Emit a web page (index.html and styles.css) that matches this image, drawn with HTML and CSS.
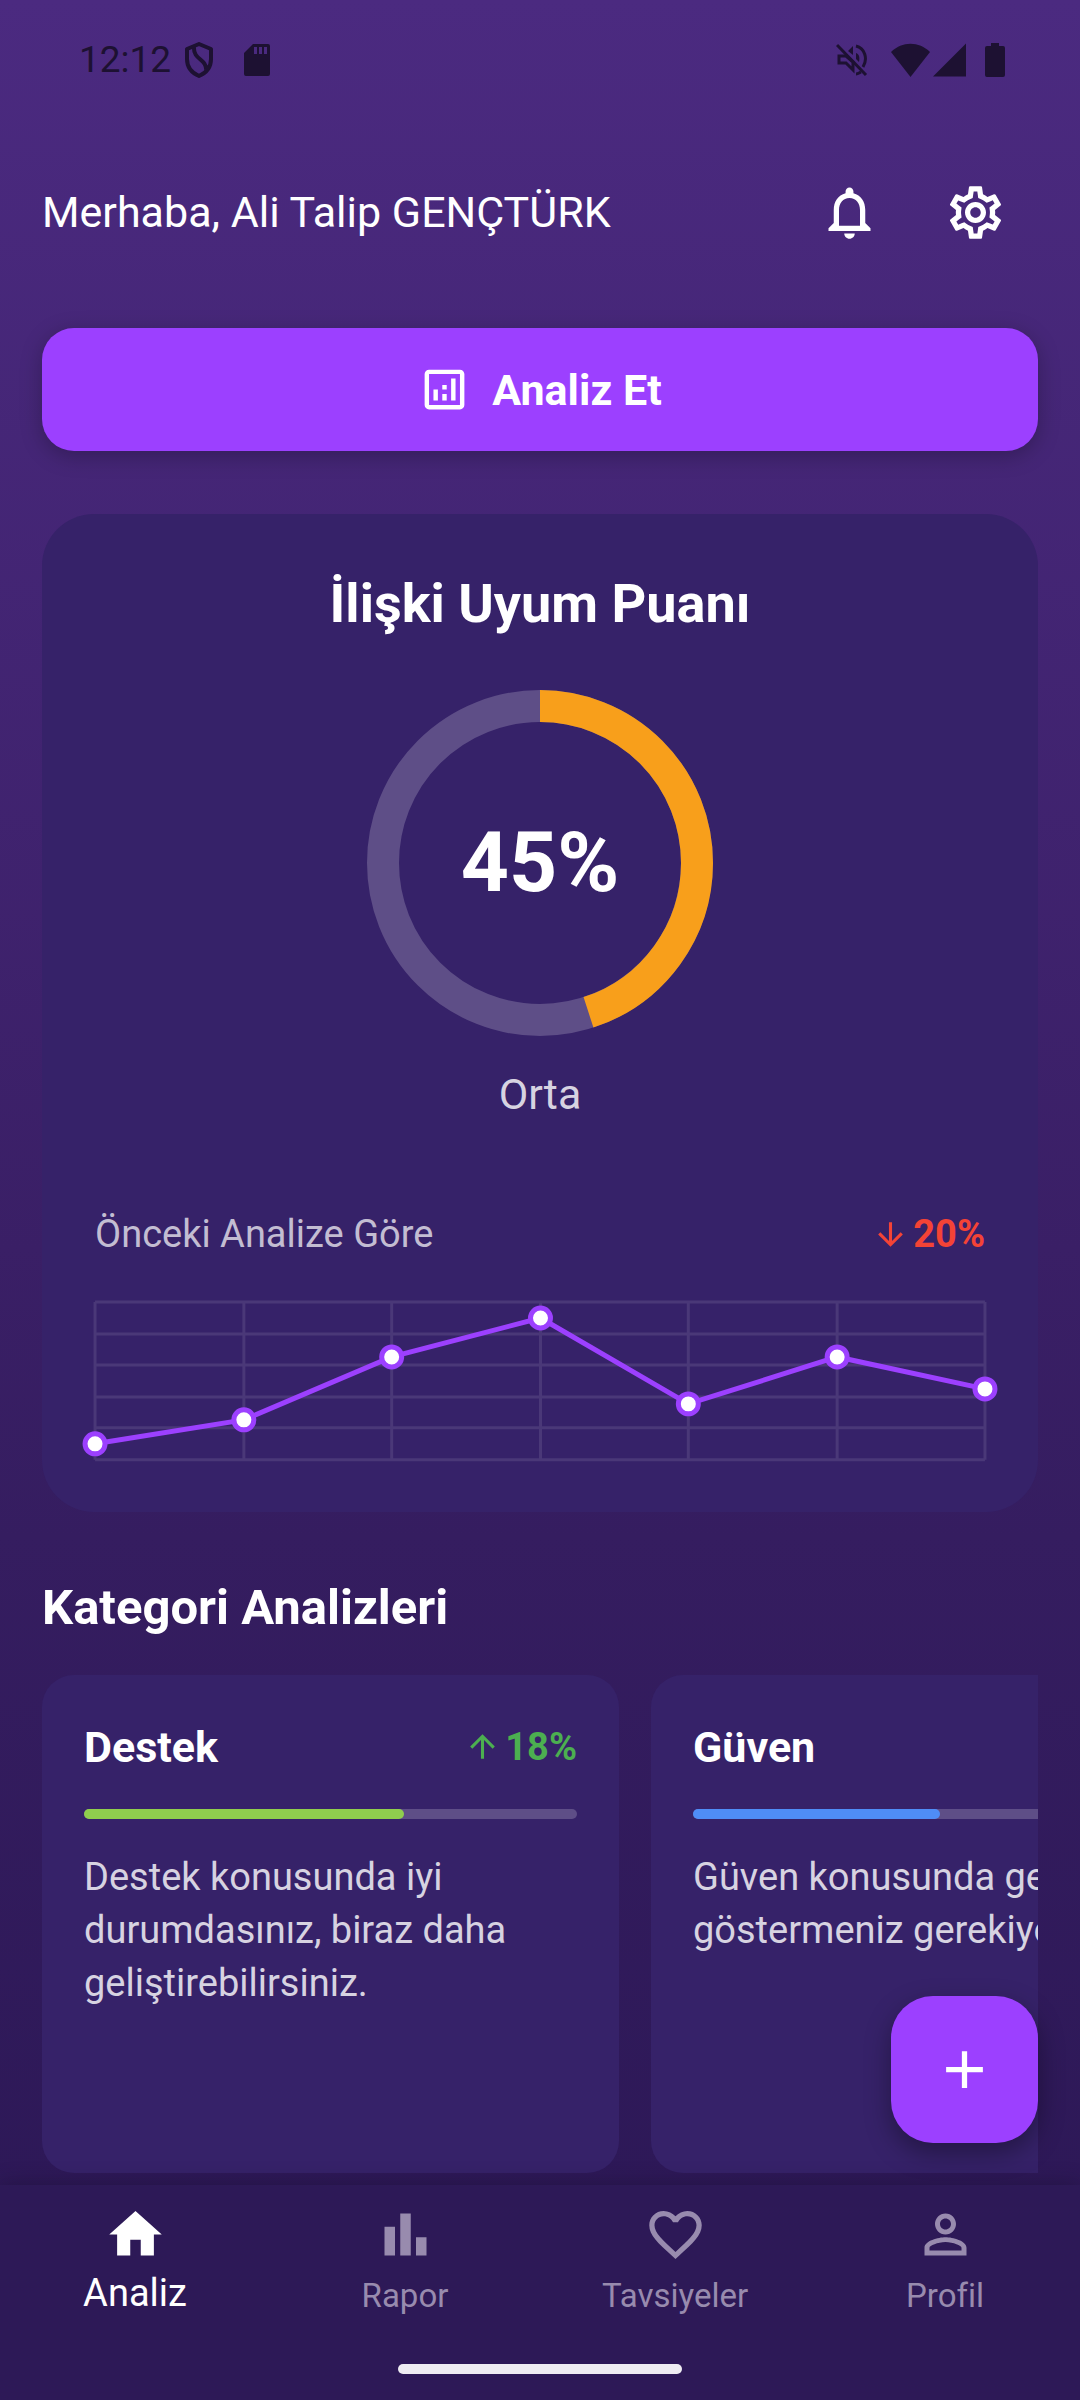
FILE: index.html
```html
<!DOCTYPE html>
<html lang="tr">
<head>
<meta charset="utf-8">
<meta name="viewport" content="width=device-width, initial-scale=1">
<title>Analiz</title>
<link rel="stylesheet" href="styles.css">
</head>
<body>
<div class="app">
  <div class="status-bar">
    <div class="status-group">
      <span class="clock">12:12</span>
      <svg class="status-shield" viewBox="0 0 30 36" aria-hidden="true"><path d="M15 2 27 7v10c0 8-5 14-12 17C8 31 3 25 3 17V7z M10 5C9 18 23 17 22 28" fill="none" stroke="currentColor" stroke-width="4" stroke-linejoin="round"/></svg>
      <svg class="status-sd" viewBox="0 0 26 32" aria-hidden="true"><path fill-rule="evenodd" d="M9 0h15a2 2 0 0 1 2 2v28a2 2 0 0 1-2 2H2a2 2 0 0 1-2-2V9zM10 3v7h3V3zm5 0v7h3V3zm5 0v7h3V3z" fill="currentColor"/></svg>
    </div>
    <div class="status-group">
      <svg class="status-mute" viewBox="0 0 32 34" aria-hidden="true"><path d="M1 2 30 32" stroke="currentColor" stroke-width="3" fill="none"/><path d="M3 13h7l7 6v8l-7-7H3z" fill="none" stroke="currentColor" stroke-width="3"/><path d="M12 8l5-5v9zM20 10c3 1 4 4 3 9l-3-3z" fill="currentColor"/><path d="M20 3c9 2 12 13 7 21M20 31c2 0 3-1 5-2" fill="none" stroke="currentColor" stroke-width="3"/></svg>
      <svg class="status-wifi" viewBox="0 0 39 34" aria-hidden="true"><path d="M0 9c11-11 28-11 39 0L19.500 34z" fill="currentColor"/></svg>
      <svg class="status-signal" viewBox="0 0 34 34" aria-hidden="true"><path d="M34 0v34H0z" fill="currentColor"/></svg>
      <svg class="status-battery" viewBox="0 0 20 34" aria-hidden="true"><path d="M6 0h8v3h4a2 2 0 0 1 2 2v27a2 2 0 0 1-2 2H2a2 2 0 0 1-2-2V5a2 2 0 0 1 2-2h4z" fill="currentColor"/></svg>
    </div>
  </div>

  <header class="header">
    <h1 class="greeting">Merhaba, Ali Talip GENÇTÜRK</h1>
    <button class="icon-button" type="button" aria-label="Bildirimler">
      <svg class="icon" viewBox="0 0 24 24" aria-hidden="true"><path d="M12 22c1.1 0 2-.9 2-2h-4c0 1.100.9 2 2 2zm6-6v-5c0-3.070-1.630-5.640-4.500-6.320V4c0-.83-.67-1.500-1.500-1.500s-1.500.67-1.500 1.500v.68C7.640 5.360 6 7.920 6 11v5l-2 2v1h16v-1l-2-2zm-2 1H8v-6c0-2.480 1.510-4.500 4-4.500s4 2.020 4 4.500v6z"/></svg>
    </button>
    <button class="icon-button" type="button" aria-label="Ayarlar">
      <svg class="icon" viewBox="0 0 24 24" aria-hidden="true"><path d="M19.43 12.98c.04-.32.07-.64.07-.98s-.03-.66-.07-.98l2.110-1.650c.19-.15.24-.42.12-.64l-2-3.460c-.09-.16-.26-.25-.44-.25-.06 0-.12.01-.17.03l-2.490 1c-.52-.4-1.080-.73-1.690-.98l-.38-2.650C14.46 2.180 14.25 2 14 2h-4c-.25 0-.46.18-.49.42l-.38 2.650c-.61.25-1.170.59-1.690.98l-2.490-1c-.06-.02-.12-.03-.18-.03-.17 0-.34.09-.43.25l-2 3.460c-.13.22-.07.49.12.64l2.110 1.650c-.04.32-.07.65-.07.98s.03.66.07.98l-2.110 1.650c-.19.15-.24.42-.12.64l2 3.460c.09.16.26.25.44.25.06 0 .12-.01.17-.03l2.490-1c.52.4 1.080.73 1.690.98l.38 2.650c.03.24.24.42.49.42h4c.25 0 .46-.18.49-.42l.38-2.650c.61-.25 1.170-.59 1.690-.98l2.490 1c.06.02.12.03.18.03.17 0 .34-.09.43-.25l2-3.460c.12-.22.07-.49-.12-.64l-2.110-1.650zm-1.980-1.710c.04.31.05.52.05.73 0 .21-.02.43-.05.73l-.14 1.130.89.7 1.080.84-.7 1.210-1.270-.51-1.040-.42-.9.68c-.43.32-.84.56-1.250.73l-1.060.43-.16 1.130-.2 1.350h-1.400l-.19-1.350-.16-1.130-1.060-.43c-.43-.18-.83-.41-1.230-.71l-.91-.7-1.060.43-1.270.51-.7-1.210 1.080-.84.89-.7-.14-1.130c-.03-.31-.05-.54-.05-.74s.02-.43.05-.73l.14-1.130-.89-.7-1.080-.84.7-1.210 1.270.51 1.040.42.9-.68c.43-.32.84-.56 1.250-.73l1.060-.43.16-1.130.2-1.350h1.390l.19 1.350.16 1.130 1.060.43c.43.18.83.41 1.230.71l.91.7 1.060-.43 1.270-.51.7 1.210-1.070.85-.89.7.14 1.130zM12 8c-2.210 0-4 1.790-4 4s1.790 4 4 4 4-1.790 4-4-1.790-4-4-4zm0 6c-1.100 0-2-.9-2-2s.9-2 2-2 2 .9 2 2-.9 2-2 2z"/></svg>
    </button>
  </header>

  <main class="content">
    <button class="analyze-button" type="button">
      <svg class="icon icon-medium" viewBox="0 0 24 24" aria-hidden="true"><path d="M19 3H5c-1.100 0-2 .9-2 2v14c0 1.100.9 2 2 2h14c1.100 0 2-.9 2-2V5c0-1.100-.9-2-2-2zm0 16H5V5h14v14zM7 12h2v5H7zm8-5h2v10h-2zm-4 7h2v3h-2zm0-4h2v2h-2z"/></svg>
      <span>Analiz Et</span>
    </button>

    <section class="score-card">
      <h2 class="score-title">İlişki Uyum Puanı</h2>
      <div class="ring">
        <svg class="ring-svg" viewBox="0 0 346 346" aria-hidden="true">
          <circle class="ring-track" cx="173" cy="173" r="157"/>
          <circle class="ring-value" cx="173" cy="173" r="157" pathLength="100" stroke-dasharray="45 55" transform="rotate(-90 173 173)"/>
        </svg>
        <span class="ring-label">45%</span>
      </div>
      <p class="score-level">Orta</p>
      <div class="trend-row">
        <span class="trend-title">Önceki Analize Göre</span>
        <span class="delta delta-down">
          <svg class="icon icon-small" viewBox="0 0 24 24" aria-hidden="true"><path d="M20 12l-1.410-1.410L13 16.170V4h-2v12.170l-5.580-5.590L4 12l8 8 8-8z"/></svg>
          20%
        </span>
      </div>
      <svg class="chart" viewBox="0 0 891 158" role="img" aria-label="Önceki analizler">
        <path class="chart-grid" d="M0 0H891M0 32H891M0 63H891M0 95H891M0 126H891M0 158H891M0 0V158M149 0V158M297 0V158M446 0V158M594 0V158M743 0V158M891 0V158"/>
        <polyline class="chart-line" points="0,142 149,118 297,55 446,16 594,102 743,55 891,87"/>
        <g class="chart-dots">
          <circle cx="0" cy="142" r="10"/><circle cx="149" cy="118" r="10"/><circle cx="297" cy="55" r="10"/><circle cx="446" cy="16" r="10"/><circle cx="594" cy="102" r="10"/><circle cx="743" cy="55" r="10"/><circle cx="891" cy="87" r="10"/>
        </g>
      </svg>
    </section>

    <h2 class="section-title">Kategori Analizleri</h2>
    <div class="category-list">
      <article class="category-card">
        <div class="category-head">
          <h3 class="category-name">Destek</h3>
          <span class="delta delta-up">
            <svg class="icon icon-small" viewBox="0 0 24 24" aria-hidden="true"><path d="M4 12l1.410 1.410L11 7.830V20h2V7.830l5.580 5.590L20 12l-8-8-8 8z"/></svg>
            18%
          </span>
        </div>
        <div class="bar"><div class="bar-fill bar-green" style="width: 65%"></div></div>
        <p class="category-text">Destek konusunda iyi durumdasınız, biraz daha geliştirebilirsiniz.</p>
      </article>
      <article class="category-card">
        <div class="category-head">
          <h3 class="category-name">Güven</h3>
        </div>
        <div class="bar"><div class="bar-fill bar-blue" style="width: 50%"></div></div>
        <p class="category-text">Güven konusunda gelişim göstermeniz gerekiyor.</p>
      </article>
    </div>
  </main>

  <div class="bottom">
    <button class="fab" type="button" aria-label="Ekle">
      <svg class="icon" viewBox="0 0 24 24" aria-hidden="true"><path d="M19 13h-6v6h-2v-6H5v-2h6V5h2v6h6v2z"/></svg>
    </button>
    <nav class="nav">
      <a class="nav-item nav-active" href="#analiz" aria-current="page">
        <svg class="icon" viewBox="0 0 24 24" aria-hidden="true"><path d="M10 20v-6h4v6h5v-8h3L12 3 2 12h3v8z"/></svg>
        <span class="nav-label">Analiz</span>
      </a>
      <a class="nav-item" href="#rapor">
        <svg class="icon" viewBox="0 0 24 24" aria-hidden="true"><path d="M4 9h4v11H4zm12 4h4v7h-4zm-6-9h4v16h-4z"/></svg>
        <span class="nav-label">Rapor</span>
      </a>
      <a class="nav-item" href="#tavsiyeler">
        <svg class="icon" viewBox="0 0 24 24" aria-hidden="true"><path d="M16.500 3c-1.740 0-3.410.81-4.500 2.090C10.910 3.810 9.240 3 7.500 3 4.420 3 2 5.420 2 8.500c0 3.780 3.400 6.860 8.550 11.540L12 21.350l1.450-1.320C18.600 15.360 22 12.280 22 8.500 22 5.420 19.580 3 16.500 3zm-4.400 15.550l-.1.1-.1-.1C7.140 14.240 4 11.390 4 8.500 4 6.500 5.500 5 7.500 5c1.540 0 3.040.99 3.570 2.360h1.870C13.460 5.990 14.960 5 16.500 5c2 0 3.500 1.500 3.500 3.500 0 2.890-3.140 5.740-7.900 10.050z"/></svg>
        <span class="nav-label">Tavsiyeler</span>
      </a>
      <a class="nav-item" href="#profil">
        <svg class="icon" viewBox="0 0 24 24" aria-hidden="true"><path d="M12 5.900c1.160 0 2.100.94 2.100 2.100s-.94 2.100-2.100 2.100S9.900 9.160 9.900 8s.94-2.100 2.100-2.100m0 9c2.970 0 6.100 1.460 6.100 2.100v1.100H5.900V17c0-.64 3.130-2.100 6.100-2.100M12 4C9.790 4 8 5.790 8 8s1.790 4 4 4 4-1.790 4-4-1.790-4-4-4zm0 9c-2.670 0-8 1.340-8 4v3h16v-3c0-2.660-5.330-4-8-4z"/></svg>
        <span class="nav-label">Profil</span>
      </a>
    </nav>
    <div class="gesture"></div>
  </div>
</div>
</body>
</html>
```
FILE: styles.css
```css
* {
  box-sizing: border-box;
  margin: 0;
}

body {
  font-family: Roboto, "Noto Sans", sans-serif;
  font-size: 38px;
  line-height: 52px;
  color: #fff;
  background: #2d1957;
}

.app {
  display: flex;
  flex-direction: column;
  min-height: 100vh;
  background: linear-gradient(#4b2a80, #3a1f66 52%, #351d60 64%, #2b1755);
}

button {
  border: 0;
  padding: 0;
  font: inherit;
  color: inherit;
  background: none;
}

.icon {
  flex: none;
  width: 63px;
  height: 63px;
  fill: currentColor;
}

.icon-medium {
  width: 53px;
  height: 53px;
}

.icon-small {
  width: 37px;
  height: 37px;
}

/* Status bar */
.status-bar {
  display: flex;
  justify-content: space-between;
  padding: 34px 75px 0 79px;
  color: #1d1132;
}

.status-group {
  display: flex;
  align-items: center;
}

.clock {
  margin-right: 13px;
  font-size: 37px;
}

.status-shield {
  width: 30px;
  height: 36px;
  margin-right: 30px;
}

.status-sd {
  width: 26px;
  height: 32px;
}

.status-mute {
  width: 32px;
  height: 34px;
  margin-right: 23px;
}

.status-wifi {
  width: 39px;
  height: 34px;
  margin-right: 3px;
}

.status-signal {
  width: 33px;
  height: 34px;
  margin-right: 19px;
}

.status-battery {
  width: 20px;
  height: 34px;
}

/* Header */
.header {
  display: flex;
  align-items: center;
  padding: 63px 42px 0;
}

.greeting {
  flex: 1;
  font-size: 43px;
  font-weight: 400;
}

.icon-button {
  display: flex;
  align-items: center;
  justify-content: center;
  width: 126px;
  height: 126px;
}

/* Content */
.content {
  display: flex;
  flex: 1;
  flex-direction: column;
  padding: 53px 42px 12px;
}

.analyze-button {
  display: flex;
  align-items: center;
  justify-content: center;
  gap: 21px;
  height: 123px;
  border-radius: 32px;
  background: #9c40ff;
  box-shadow: 0 5px 21px rgba(0, 0, 0, 0.25);
  font-size: 43px;
  font-weight: 700;
}

.score-card {
  display: flex;
  flex-direction: column;
  align-items: center;
  margin-top: 63px;
  padding: 54px 53px 52px;
  border-radius: 52px;
  background: #362269;
}

.score-title {
  font-size: 54px;
  line-height: 72px;
}

.ring {
  display: grid;
  margin-top: 50px;
}

.ring-svg,
.ring-label {
  grid-area: 1 / 1;
  place-self: center;
}

.ring-svg {
  width: 346px;
  height: 346px;
  fill: none;
  stroke-width: 32;
}

.ring-track {
  stroke: #5e4e87;
}

.ring-value {
  stroke: #f89f1b;
}

.ring-label {
  font-size: 84px;
  font-weight: 700;
}

.score-level {
  margin-top: 32px;
  font-size: 43px;
  color: #d7d3e1;
}

.trend-row {
  display: flex;
  justify-content: space-between;
  width: 100%;
  margin-top: 88px;
}

.trend-title {
  color: #c3bdd2;
}

.delta {
  display: flex;
  align-items: center;
  gap: 4px;
  font-weight: 700;
}

.delta-down {
  color: #f44336;
}

.delta-up {
  color: #4caf50;
}

.chart {
  display: block;
  width: 100%;
  height: auto;
  margin-top: 42px;
  overflow: visible;
}

.chart-grid {
  fill: none;
  stroke: #4a3878;
  stroke-width: 3;
}

.chart-line {
  fill: none;
  stroke: #9c40ff;
  stroke-width: 5;
}

.chart-dots {
  fill: #fff;
  stroke: #9c40ff;
  stroke-width: 5;
}

.section-title {
  margin-top: 70px;
  font-size: 49px;
}

/* Categories */
.category-list {
  display: flex;
  flex: 1;
  gap: 32px;
  min-height: 498px;
  margin-top: 41px;
  overflow: hidden;
}

.category-card {
  flex: none;
  width: 577px;
  padding: 42px;
  border-radius: 32px;
  background: #362269;
}

.category-head {
  display: flex;
  align-items: center;
  justify-content: space-between;
  min-height: 60px;
}

.category-name {
  font-size: 43px;
}

.bar {
  height: 10px;
  margin: 32px 0;
  border-radius: 5px;
  background: #5e4e87;
}

.bar-fill {
  height: 100%;
  border-radius: 5px;
}

.bar-green {
  background: #8fce4e;
}

.bar-blue {
  background: #4f8df7;
}

.category-text {
  line-height: 53px;
  color: #d7d3e1;
}

/* Bottom navigation */
.bottom {
  position: relative;
  padding: 18px 0 26px;
  background: #2d1957;
  box-shadow: 0 0 21px rgba(0, 0, 0, 0.25);
}

.fab {
  position: absolute;
  right: 42px;
  bottom: calc(100% + 42px);
  display: flex;
  align-items: center;
  justify-content: center;
  width: 147px;
  height: 147px;
  border-radius: 42px;
  background: #9c40ff;
  box-shadow: 0 10px 26px rgba(0, 0, 0, 0.35);
}

.nav {
  display: grid;
  grid-template-columns: repeat(4, 1fr);
}

.nav-item {
  display: flex;
  flex-direction: column;
  align-items: center;
  color: #988bae;
  text-decoration: none;
}

.nav-label {
  margin-top: 4px;
  font-size: 33px;
}

.nav-active {
  color: #fff;
}

.nav-active .nav-label {
  margin-top: 1px;
  font-size: 38px;
}

.gesture {
  width: 284px;
  height: 10px;
  margin: 42px auto 0;
  border-radius: 5px;
  background: #eeecf2;
}
```
